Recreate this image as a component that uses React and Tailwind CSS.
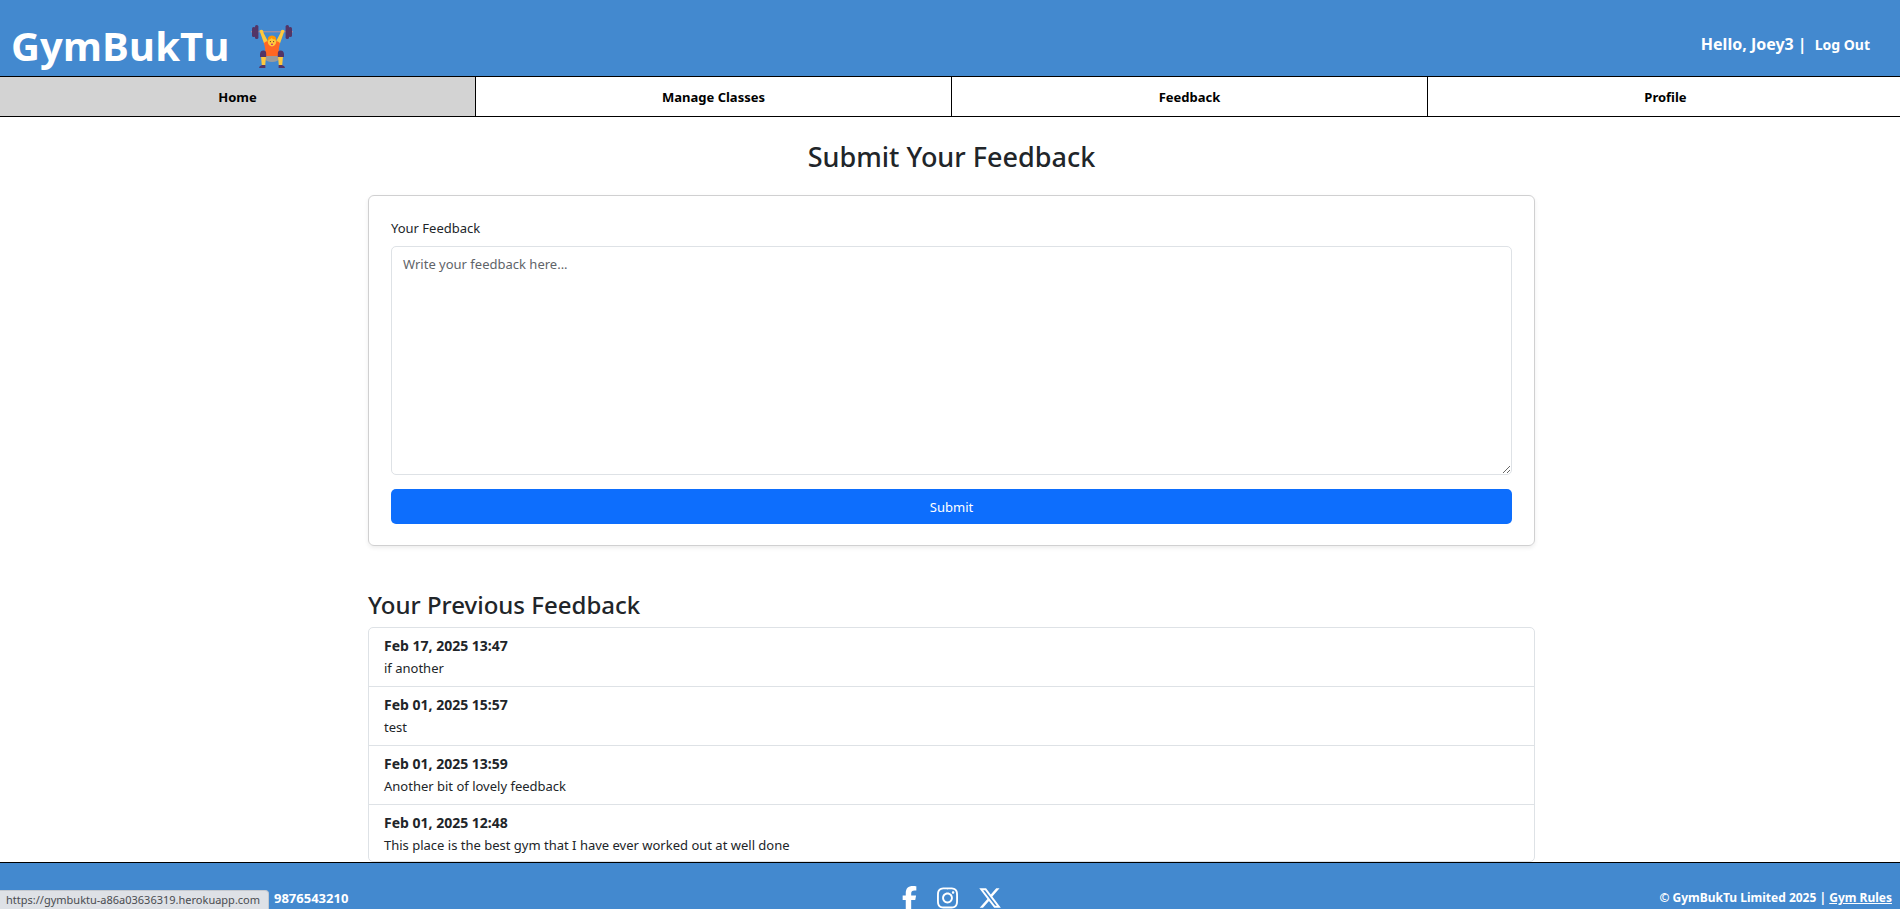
import React from "react";
import { FaFacebookF, FaInstagram, FaXTwitter } from "react-icons/fa6";

const navItems = [
  { label: "Home", active: true },
  { label: "Manage Classes" },
  { label: "Feedback" },
  { label: "Profile" },
];

const feedback = [
  { date: "Feb 17, 2025 13:47", text: "if another" },
  { date: "Feb 01, 2025 15:57", text: "test" },
  { date: "Feb 01, 2025 13:59", text: "Another bit of lovely feedback" },
  {
    date: "Feb 01, 2025 12:48",
    text: "This place is the best gym that I have ever worked out at well done",
  },
];

function Lifter() {
  return (
    <svg viewBox="0 0 42 43" className="h-[43px] w-[42px]" aria-hidden="true">
      <rect x="0" y="6" width="42" height="1.4" fill="#998ea4" />
      <g fill="#533566">
        <rect x="1" y="2" width="3.6" height="10" rx="1.6" />
        <rect x="4" y="0" width="3.4" height="14" rx="1.6" />
        <rect x="37.4" y="2" width="3.6" height="10" rx="1.6" />
        <rect x="34.6" y="0" width="3.4" height="14" rx="1.6" />
      </g>
      <path d="M13 30h16v3q-2 4-8 4t-8-4z" fill="#9b9b9b" />
      <g fill="#ffc83d">
        <path d="M8.5 5.5q2-1.5 3.5 0l.6 2.6 4.400 8.500-3.600 2.900L9.500 8.500z" />
        <path d="M33.5 5.5q-2-1.5-3.5 0l-.6 2.6-4.400 8.500 3.600 2.900L32.500 8.500z" />
        <path d="M10 31h5l-.8 9.5h-3.4z" />
        <path d="M32 31h-5l.8 9.5h3.4z" />
      </g>
      <path d="M13 18q2-2 4.5-2h7q2.500 0 4.500 2l-1.200 6v7H14.200v-7z" fill="#ff6723" />
      <ellipse cx="21" cy="16.5" rx="4.200" ry="5" fill="#ffc83d" />
      <path d="M16.6 17.500q-.8-7 4.400-7t4.400 7l-1-3q-2.400.2-3.800-1.500-1 1.500-3 1.700z" fill="#ff9500" />
      <circle cx="19.4" cy="16.6" r=".6" fill="#5a3b28" />
      <circle cx="22.6" cy="16.6" r=".6" fill="#5a3b28" />
      <ellipse cx="21" cy="19.2" rx="1" ry=".8" fill="#bb1d80" />
      <g fill="#533566">
        <path d="M9 29q.4-3.400 3.400-3.400T15.200 29v3H9z" />
        <path d="M33 29q-.4-3.400-3.400-3.400T26.800 29v3H33z" />
        <path d="M8 43q0-2 3-3h3.400v3z" />
        <path d="M34 43q0-2-3-3h-3.400v3z" />
      </g>
    </svg>
  );
}

export default function App() {
  return (
    <div className="overflow-x-hidden bg-white font-['Noto_Sans','Open_Sans',sans-serif] text-[13px] leading-[22px] text-[#212529]">
      <div className="-mr-[3px]">
        <header className="flex items-center justify-between border-b border-black bg-[#4389cf] pt-4 pr-[33px] pl-[11px] text-white">
          <h1 className="flex items-center gap-[22px] font-['Open_Sans','Noto_Sans',sans-serif] text-[40px] leading-[60px] font-bold">
            GymBukTu
            <Lifter />
          </h1>
          <div className="flex items-baseline gap-2 pb-1 font-bold">
            <span className="text-[16px]">Hello, Joey3 |</span>
            <a href="#logout" className="text-[14px]">Log Out</a>
          </div>
        </header>

        <nav className="-mr-px grid grid-cols-4 border-b border-black">
          {navItems.map((item) => (
            <a
              key={item.label}
              href={"#" + item.label.toLowerCase().replace(" ", "-")}
              className={
                "border-r border-black pt-[9px] pb-[7px] text-center leading-[23px] font-bold text-black " +
                (item.active ? "bg-[#d3d3d3]" : "bg-white")
              }
            >
              {item.label}
            </a>
          ))}
        </nav>

        <main className="mx-auto max-w-[1167px]">
          <h2 className="pt-[23px] pb-[21px] text-center text-[27px] leading-[34px] font-medium">
            Submit Your Feedback
          </h2>
          <form
            className="rounded-md border border-[#d0d0d1] px-[22px] pt-[21px] pb-[21px] shadow-[0_2px_4px_rgba(0,0,0,0.075)]"
            onSubmit={(e) => e.preventDefault()}
          >
            <label htmlFor="feedback" className="mb-[7px] block">
              Your Feedback
            </label>
            <textarea
              id="feedback"
              placeholder="Write your feedback here..."
              className="mb-[14px] block h-[229px] w-full resize rounded-[5px] border border-[#dee2e6] px-[11px] py-[6px] placeholder:text-[#5f6469]"
            />
            <button
              type="submit"
              className="block h-[35px] w-full rounded-[5px] bg-[#0d6efd] text-white"
            >
              Submit
            </button>
          </form>

          <h3 className="pt-[43px] pb-[6px] text-[24px] leading-8 font-medium">
            Your Previous Feedback
          </h3>
          <ul className="divide-y divide-[#dee2e6] rounded-[5px] border border-[#dee2e6]">
            {feedback.map((item) => (
              <li key={item.date} className="px-[15px] py-[7px] last:pb-[5px]">
                <strong className="block text-[14px]">{item.date}</strong>
                <p>{item.text}</p>
              </li>
            ))}
          </ul>
        </main>

        <footer className="grid grid-cols-[1fr_auto_1fr] items-center border-t border-black bg-[#4389cf] px-[11px] py-[23px] text-[12px] font-bold text-white">
          <span className="pl-[263px] text-[13px]">9876543210</span>
          <div className="flex items-center gap-5">
            <a href="#facebook" aria-label="Facebook"><FaFacebookF className="h-6 w-[15px]" /></a>
            <a href="#instagram" aria-label="Instagram"><FaInstagram className="h-6 w-[21px]" /></a>
            <a href="#x" aria-label="X"><FaXTwitter className="h-6 w-6" /></a>
          </div>
          <p className="text-right">
            © GymBukTu Limited 2025 | <a href="#rules" className="underline">Gym Rules</a>
          </p>
        </footer>
      </div>

      <div className="fixed bottom-0 left-0 rounded-tr-[4px] border-t border-r border-[#c4c9d0] bg-[#dee1e6] pr-2 pl-[6px] text-[11px] leading-[18px] text-[#4a4c50]">
        https://gymbuktu-a86a03636319.herokuapp.com
      </div>
    </div>
  );
}
